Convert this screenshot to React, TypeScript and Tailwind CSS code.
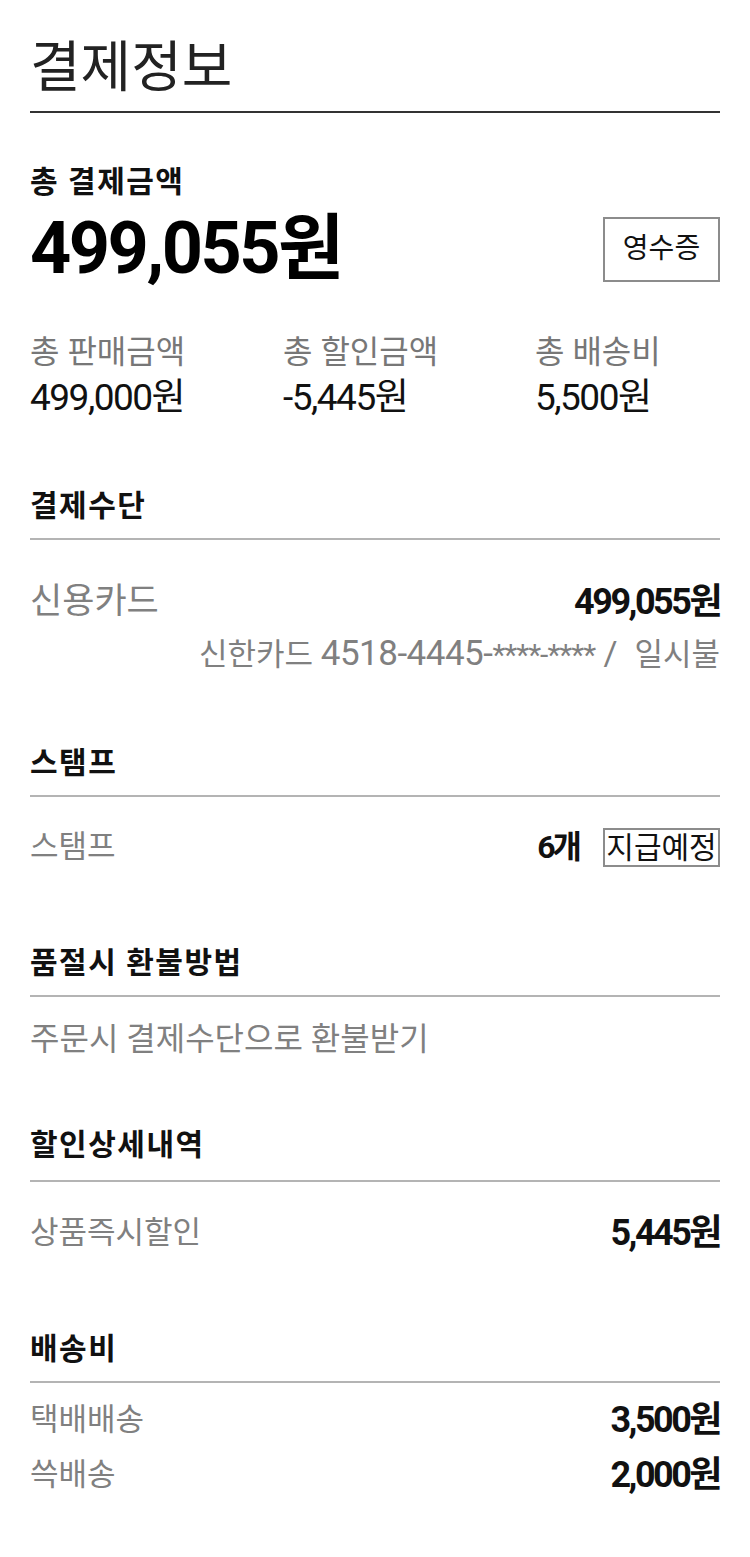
import React from "react";

const font = { fontFamily: 'Roboto, "Noto Sans CJK KR", sans-serif' };

function SectionTitle({ title, className = "" }: { title: string; className?: string }) {
  return (
    <h2
      className={`text-[30px] leading-[36px] font-bold text-[#111] tracking-[1.5px] pb-[14px] border-b-2 border-[#b4b4b4] ${className}`}
    >
      {title}
    </h2>
  );
}

function Row({ label, value, className = "" }: { label: string; value: React.ReactNode; className?: string }) {
  return (
    <div className={`flex items-center justify-between ${className}`}>
      <span className="text-[31px] leading-[36px] text-[#808080]">{label}</span>
      <span className="text-[36px] leading-[36px] font-bold text-[#111] tracking-[-2.5px]">{value}</span>
    </div>
  );
}

export default function App() {
  const totals = [
    { label: "총 판매금액", value: "499,000원" },
    { label: "총 할인금액", value: "-5,445원" },
    { label: "총 배송비", value: "5,500원" },
  ];

  return (
    <div className="bg-white px-[30px] pb-[60px]" style={font}>
      <h1 className="pt-[36px] pb-[13px] text-[55px] leading-[62px] font-normal text-[#222] border-b-2 border-[#333]">
        결제정보
      </h1>

      {/* 총 결제금액 */}
      <div className="mt-[51px]">
        <h2 className="text-[30px] leading-[36px] font-bold text-[#111] tracking-[1.5px]">총 결제금액</h2>
        <div className="flex items-center justify-between mt-[14px]">
          <p className="text-[72px] leading-[70px] font-bold text-black tracking-[-2.5px]">499,055원</p>
          <button className="w-[117px] h-[65px] border-2 border-[#8c8c8c] text-[28px] text-[#111] bg-white">
            영수증
          </button>
        </div>
        <div className="grid grid-cols-[253px_252px_1fr] mt-[50px]">
          {totals.map((t) => (
            <div key={t.label}>
              <p className="text-[32px] leading-[36px] text-[#777]">{t.label}</p>
              <p className="text-[37px] leading-[40px] text-[#111] tracking-[-1.5px] mt-[8px]">{t.value}</p>
            </div>
          ))}
        </div>
      </div>

      {/* 결제수단 */}
      <div className="mt-[70px]">
        <SectionTitle title="결제수단" />
        <div className="flex items-center justify-between mt-[42px]">
          <span className="text-[35px] leading-[40px] text-[#808080]">신용카드</span>
          <span className="text-[36px] leading-[40px] font-bold text-[#111] tracking-[-2.5px]">499,055원</span>
        </div>
        <p className="text-right text-[31px] leading-[40px] text-[#808080] mt-[11px]">
          신한카드 <span className="text-[35px] tracking-[-0.5px]">4518-4445-</span>
          <span className="text-[30px] tracking-[-1px]">****-****</span>
          <span className="text-[34px]"> /&nbsp; </span>일시불
        </p>
      </div>

      {/* 스탬프 */}
      <div className="mt-[70px]">
        <SectionTitle title="스탬프" />
        <div className="flex items-center justify-between mt-[30px]">
          <span className="text-[31px] leading-[40px] text-[#808080]">스탬프</span>
          <div className="flex items-center gap-[24px]">
            <span className="text-[32px] leading-[40px] font-bold text-[#111] tracking-[-3px]">6개</span>
            <span className="w-[117px] h-[39px] border-2 border-[#8c8c8c] flex items-center justify-center text-[30px] text-[#111]">
              지급예정
            </span>
          </div>
        </div>
      </div>

      {/* 품절시 환불방법 */}
      <div className="mt-[78px]">
        <SectionTitle title="품절시 환불방법" />
        <p className="mt-[22px] text-[32px] leading-[40px] text-[#808080]">주문시 결제수단으로 환불받기</p>
      </div>

      {/* 할인상세내역 */}
      <div className="mt-[68px]">
        <SectionTitle title="할인상세내역" className="pb-[17px]" />
        <Row label="상품즉시할인" value="5,445원" className="mt-[33px]" />
      </div>

      {/* 배송비 */}
      <div className="mt-[80px]">
        <SectionTitle title="배송비" />
        <Row label="택배배송" value="3,500원" className="mt-[19px]" />
        <Row label="쓱배송" value="2,000원" className="mt-[19px]" />
      </div>
    </div>
  );
}
